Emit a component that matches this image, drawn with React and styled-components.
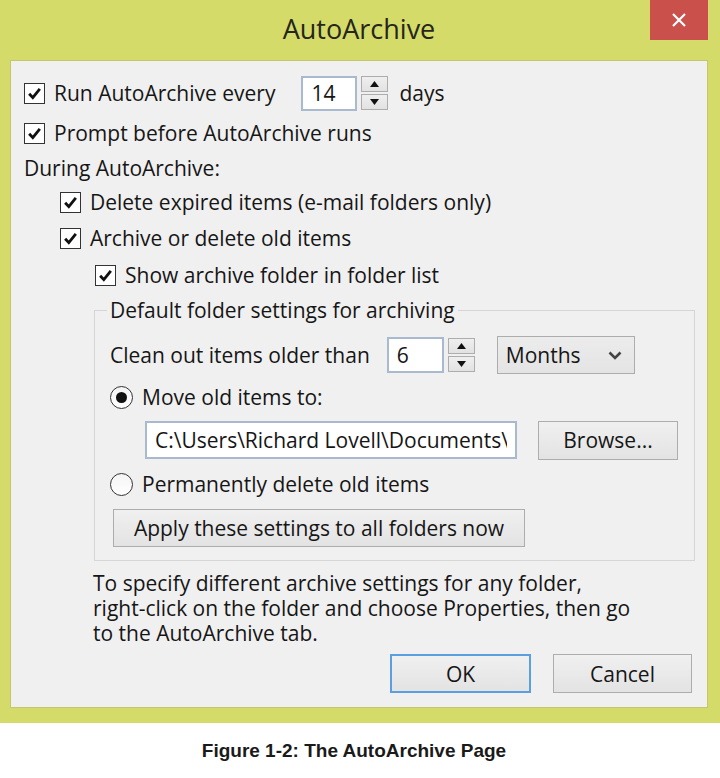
import React from 'react'
import styled, { createGlobalStyle } from 'styled-components'

const GlobalStyle = createGlobalStyle`
  html, body {
    margin: 0;
    padding: 0;
    background: #fff;
  }
  body {
    font-family: "Open Sans", "Noto Sans", sans-serif;
    color: #161616;
  }
`

const Page = styled.div`
  width: 720px;
  height: 778px;
  display: flex;
  flex-direction: column;
`

const Frame = styled.div`
  height: 723px;
  box-sizing: border-box;
  background: #d5db69;
  padding: 0 12px 15px 10px;
  display: flex;
  flex-direction: column;
`

const TitleBar = styled.div`
  height: 60px;
  display: grid;
  grid-template-columns: 1fr auto 1fr;
`

const Title = styled.div`
  grid-column: 2;
  font-size: 27px;
  line-height: 60px;
  margin-top: -1px;
  color: #26261e;
`

const Close = styled.div`
  grid-column: 3;
  justify-self: end;
  width: 58px;
  height: 40px;
  background: #c9504b;
  display: flex;
  align-items: center;
  justify-content: center;
`

const Panel = styled.div`
  flex: 1;
  background: #f0f0f0;
  border: 1px solid #c3c86e;
  padding: 14px 12px 0 13px;
  display: flex;
  flex-direction: column;
`

const Row = styled.div`
  display: flex;
  align-items: center;
  height: ${p => p.h || 36}px;
  margin-left: ${p => p.indent || 0}px;
  margin-top: ${p => p.mt || 0}px;
  font-size: 21px;
  white-space: nowrap;
`

const Box = styled.span`
  width: 21px;
  height: 21px;
  box-sizing: border-box;
  border: 1px solid #333;
  background: #fff;
  display: inline-flex;
  align-items: center;
  justify-content: center;
  margin-right: 9px;
  flex: none;
`

const Radio = styled.span`
  width: 23px;
  height: 23px;
  box-sizing: border-box;
  border-radius: 50%;
  border: 1px solid #333;
  background: linear-gradient(#f4f4f4, #fff);
  display: inline-flex;
  align-items: center;
  justify-content: center;
  margin-right: 9px;
  flex: none;
  &::after {
    content: "";
    display: ${p => (p.on ? 'block' : 'none')};
    width: 11px;
    height: 11px;
    border-radius: 50%;
    background: #111;
  }
`

const Field = styled.input`
  box-sizing: border-box;
  width: ${p => p.w}px;
  height: ${p => p.h || 35}px;
  margin: 0 0 0 ${p => p.ml || 0}px;
  background: #fff;
  border: 2px solid #a9b9cf;
  padding: 0 8px;
  font-family: "Open Sans", "Noto Sans", sans-serif;
  font-size: 21px;
  color: #161616;
  outline: none;
  flex: none;
`

const Spin = styled.div`
  display: flex;
  flex-direction: column;
  gap: 2px;
  margin-left: 4px;
  flex: none;
`

const SpinBtn = styled.span`
  width: 27px;
  height: 16px;
  box-sizing: border-box;
  border: 1px solid #adadad;
  background: linear-gradient(#efefef, #e2e2e2);
  display: flex;
  align-items: center;
  justify-content: center;
`

const Label = styled.span`
  margin-left: ${p => p.ml || 0}px;
`

const Combo = styled.div`
  box-sizing: border-box;
  width: 138px;
  height: 38px;
  margin-left: 22px;
  border: 1px solid #adadad;
  background: linear-gradient(#ececec, #e4e4e4);
  display: flex;
  align-items: center;
  justify-content: space-between;
  padding: 0 12px 0 8px;
  font-size: 21px;
`

const Button = styled.div`
  box-sizing: border-box;
  width: ${p => p.w}px;
  height: ${p => p.h || 39}px;
  margin-left: ${p => p.ml || 0}px;
  border: ${p => (p.def ? '2px solid #5a9fe0' : '1px solid #adadad')};
  background: linear-gradient(#f0f0f0, #e3e3e3);
  display: flex;
  align-items: center;
  justify-content: center;
  font-size: 21px;
  white-space: nowrap;
  flex: none;
`

const Group = styled.fieldset`
  margin: 2px 0 0 70px;
  padding: 11px 0 13px 15px;
  border: 1px solid #d6d6d6;
  min-width: 0;
`

const Legend = styled.legend`
  padding: 0 3px;
  margin-left: -3px;
  font-size: 21px;
  line-height: 30px;
`

const Note = styled.p`
  margin: 10px 0 0 69px;
  font-size: 21px;
  line-height: 25px;
`

const Actions = styled.div`
  display: flex;
  justify-content: flex-end;
  gap: 22px;
  margin: 8px 3px 0 0;
`

const Caption = styled.div`
  flex: 1;
  display: flex;
  align-items: center;
  justify-content: center;
  padding-right: 12px;
  font-family: "Liberation Sans", Arial, sans-serif;
  font-weight: bold;
  font-size: 19px;
  color: #1a1a1a;
`

function Check() {
  return (
    <Box>
      <svg width="15" height="15" viewBox="0 0 16 16">
        <path d="M2.3 8.2 L6.2 12.4 L13.7 3" fill="none" stroke="#111" strokeWidth="3" />
      </svg>
    </Box>
  )
}

function Spinner() {
  return (
    <Spin>
      <SpinBtn>
        <svg width="9" height="6" viewBox="0 0 9 6"><path d="M0 6 L4.5 0 L9 6 Z" fill="#111" /></svg>
      </SpinBtn>
      <SpinBtn>
        <svg width="9" height="6" viewBox="0 0 9 6"><path d="M0 0 L9 0 L4.5 6 Z" fill="#111" /></svg>
      </SpinBtn>
    </Spin>
  )
}

export default function App() {
  return (
    <Page>
      <GlobalStyle />
      <Frame>
        <TitleBar>
          <Title>AutoArchive</Title>
          <Close>
            <svg width="14" height="14" viewBox="0 0 14 14">
              <path d="M1 1 L13 13 M13 1 L1 13" stroke="#fff" strokeWidth="2.2" />
            </svg>
          </Close>
        </TitleBar>
        <Panel>
          <Row>
            <Check />
            Run AutoArchive every
            <Field w={56} h={35} ml={26} readOnly value="14" />
            <Spinner />
            <Label ml={11}>days</Label>
          </Row>
          <Row mt={4}>
            <Check />
            Prompt before AutoArchive runs
          </Row>
          <Row mt={-1}>During AutoArchive:</Row>
          <Row mt={-2} indent={36}>
            <Check />
            Delete expired items (e-mail folders only)
          </Row>
          <Row indent={36}>
            <Check />
            Archive or delete old items
          </Row>
          <Row mt={1} indent={71}>
            <Check />
            Show archive folder in folder list
          </Row>
          <Group>
            <Legend>Default folder settings for archiving</Legend>
            <Row h={38}>
              Clean out items older than
              <Field w={57} h={36} ml={17} readOnly value="6" />
              <Spinner />
              <Combo>
                Months
                <svg width="14" height="9" viewBox="0 0 14 9">
                  <path d="M1.5 1.5 L7 7 L12.5 1.5" fill="none" stroke="#444" strokeWidth="2.6" />
                </svg>
              </Combo>
            </Row>
            <Row h={34} mt={6}>
              <Radio on />
              Move old items to:
            </Row>
            <Row h={40} mt={6}>
              <Field
                w={372}
                h={38}
                ml={35}
                readOnly
                value="C:\Users\Richard Lovell\Documents\Outlook Files\archive.pst"
              />
              <Button w={140} ml={21}>Browse...</Button>
            </Row>
            <Row h={34} mt={7}>
              <Radio />
              Permanently delete old items
            </Row>
            <Row h={38} mt={8}>
              <Button w={412} h={38} ml={3}>Apply these settings to all folders now</Button>
            </Row>
          </Group>
          <Note>
            To specify different archive settings for any folder,
            <br />
            right-click on the folder and choose Properties, then go
            <br />
            to the AutoArchive tab.
          </Note>
          <Actions>
            <Button w={141} def>OK</Button>
            <Button w={139}>Cancel</Button>
          </Actions>
        </Panel>
      </Frame>
      <Caption>Figure 1-2: The AutoArchive Page</Caption>
    </Page>
  )
}
